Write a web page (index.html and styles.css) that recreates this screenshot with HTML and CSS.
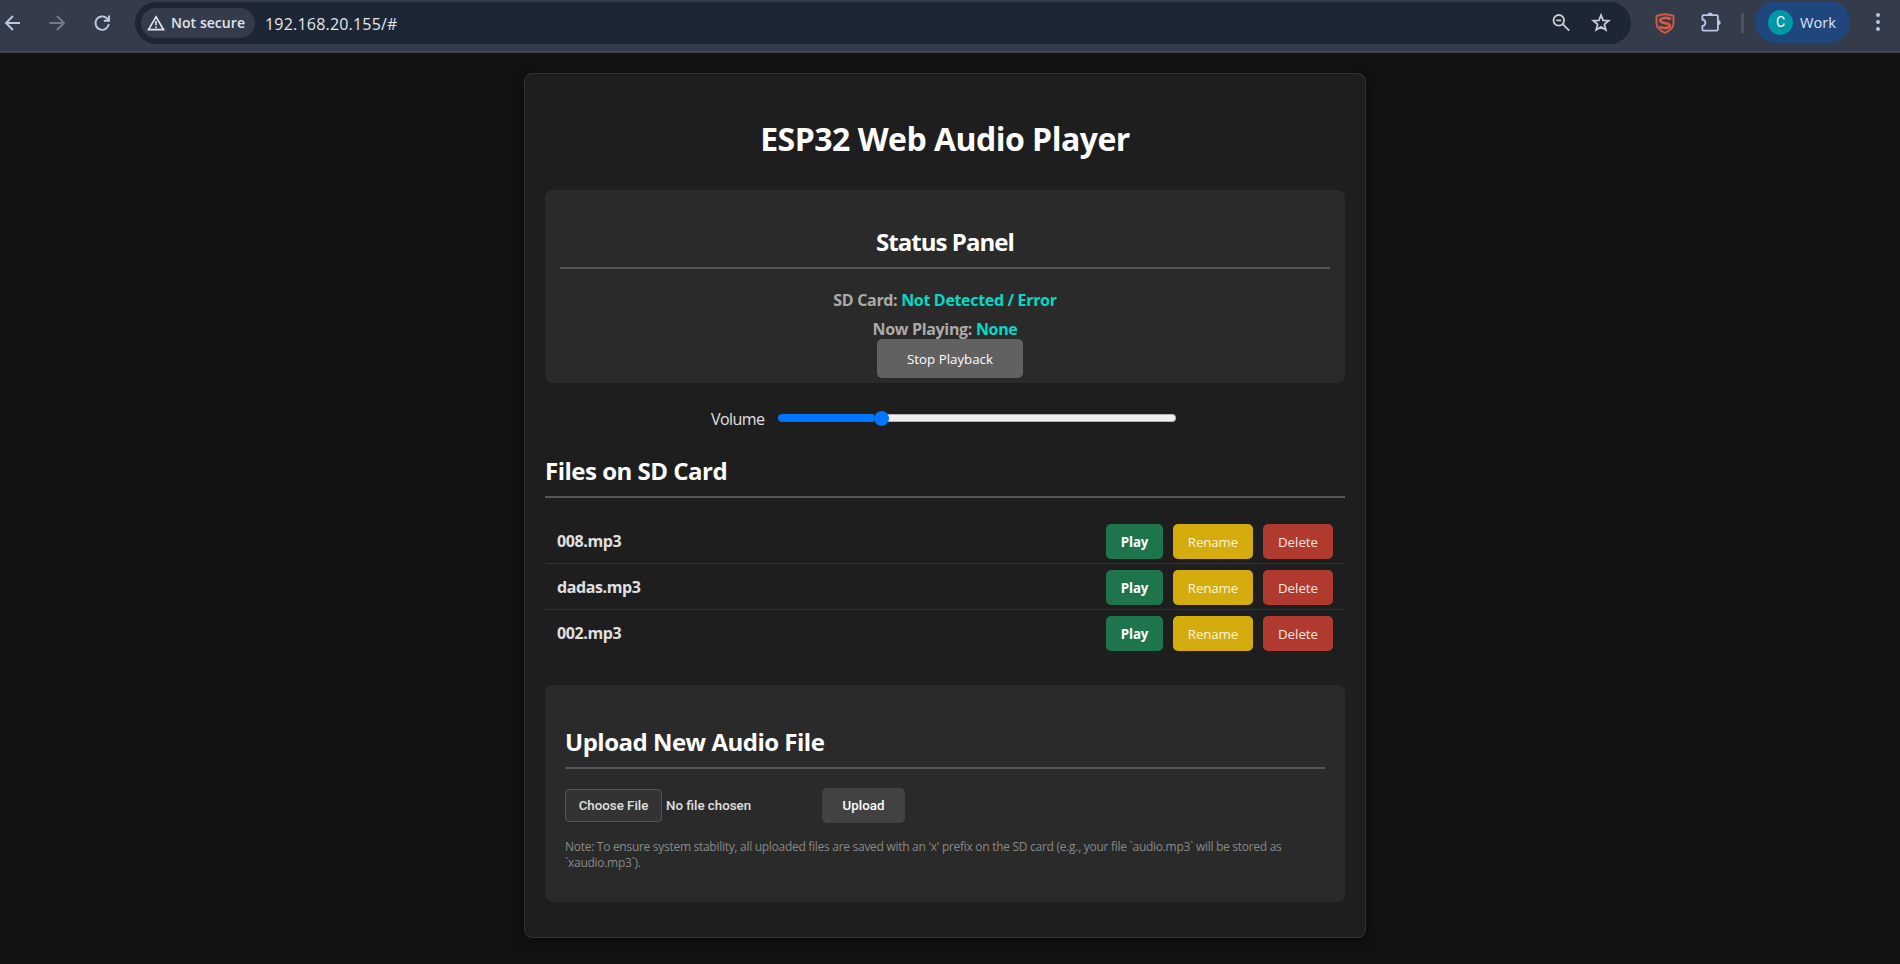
FILE: index.html
```html
<!DOCTYPE html>
<html lang="en">
<head>
<meta charset="utf-8">
<title>ESP32 Web Audio Player</title>
<link rel="stylesheet" href="styles.css">
</head>
<body>
<header class="toolbar">
  <nav class="nav">
    <svg class="icon" viewBox="0 0 20 20"><path d="M18 10H4M11 3L4 10l7 7"/></svg>
    <svg class="icon dim" viewBox="0 0 20 20"><path d="M2.500 10h14M10 3l7 7-7 7"/></svg>
    <svg class="icon" viewBox="0 0 20 20"><path d="M16.800 11a6.700 6.700 0 1 1-2-5.700L17 7.500M17 2.600v5.200h-5.200"/></svg>
  </nav>
  <div class="omnibox">
    <span class="chip">
      <svg class="warn" viewBox="0 0 18 16"><path d="M9 1.800L16.600 14.700H1.400z"/><path d="M9 6v4.300M9 11.500v1.700"/></svg>
      <b class="chip-text">Not secure</b>
    </span>
    <span class="url">192.168.20.155/#</span>
    <svg class="box-icon magnifier" viewBox="0 0 20 20"><circle cx="7.800" cy="7.300" r="5.300"/><path d="M11.700 11.200l6.500 6.500M5.300 7.300h5"/></svg>
    <svg class="box-icon star" viewBox="0 0 20 20"><path d="M10 2.200l2.100 5.200 5.600.4-4.300 3.600 1.400 5.500-4.800-3-4.800 3 1.400-5.500-4.300-3.600 5.600-.4z"/></svg>
  </div>
  <svg class="shield" viewBox="0 0 20 21"><path class="shield-rim" d="M1.500 3Q10-.4 18.500 3v8Q18 16.500 10 19.800 2 16.500 1.500 11z"/><path class="shield-mark" d="M16 6.300C12 4.300 5.200 4.400 5.200 7.600c0 3.400 9.600 1.600 9.600 5 0 3.200-6.800 3-10.600 1"/></svg>
  <svg class="puzzle" viewBox="0 0 22 22"><path d="M3.600 4.200h13.100q1.200 0 1.200 1.200v13q0 1.200-1.200 1.200H3.600q-1.200 0-1.200-1.200v-3.300q3-.6 3-3.300t-3-3.300V5.400q0-1.200 1.200-1.200z"/><path class="knob" d="M7.600 4a2.600 2.600 0 0 1 5.200 0zM18 9a2.600 2.600 0 0 1 0 5.200z"/></svg>
  <span class="divider"></span>
  <div class="profile"><span class="avatar">C</span><span class="work">Work</span></div>
  <div class="kebab"><i></i><i></i><i></i></div>
</header>

<main class="container">
  <h1 class="title">ESP32 Web Audio Player</h1>
  <section class="status">
    <h2 class="heading status-heading">Status Panel</h2>
    <p class="line sd">SD Card: <span class="value">Not Detected / Error</span></p>
    <p class="line now">Now Playing: <span class="value">None</span></p>
    <button class="btn stop">Stop Playback</button>
  </section>
  <div class="volume">
    <label class="volume-label">Volume</label>
    <div class="track"><div class="fill"></div><div class="thumb"></div><div class="rest"></div></div>
  </div>
  <h2 class="heading files-heading">Files on SD Card</h2>
  <ul class="files">
    <li class="file"><span class="name">008.mp3</span><button class="btn play">Play</button><button class="btn rename">Rename</button><button class="btn delete">Delete</button></li>
    <li class="file"><span class="name">dadas.mp3</span><button class="btn play">Play</button><button class="btn rename">Rename</button><button class="btn delete">Delete</button></li>
    <li class="file"><span class="name">002.mp3</span><button class="btn play">Play</button><button class="btn rename">Rename</button><button class="btn delete">Delete</button></li>
  </ul>
  <section class="upload">
    <h2 class="heading upload-heading">Upload New Audio File</h2>
    <div class="form">
      <button class="choose">Choose File</button>
      <span class="chosen">No file chosen</span>
      <button class="btn send">Upload</button>
    </div>
    <p class="note">Note: To ensure system stability, all uploaded files are saved with an 'x' prefix on the SD card (e.g., your file `audio.mp3` will be stored as<br>`xaudio.mp3`).</p>
  </section>
</main>
</body>
</html>
```

FILE: styles.css
```css
* { box-sizing: border-box; }
body { margin: 0; height: 964px; overflow: hidden; background: #121212; color: #e0e0e0; font: 16px/22px "Open Sans", "Noto Sans", sans-serif; }
h1, h2, p, ul { margin: 0; padding: 0; }
svg { fill: none; flex: none; }
button { font-family: inherit; padding: 0; border: 0; white-space: nowrap; }

.toolbar { display: flex; height: 53px; padding-top: 2px; background: #343c4c; border-bottom: 2px solid #42474d; }
.nav { display: flex; gap: 25px; width: 135px; padding: 11px 0 0 2px; }
.icon { width: 20px; height: 20px; stroke: #bfcbe2; stroke-width: 1.9; }
.dim { stroke: #747a87; }
.omnibox { display: flex; align-items: center; width: 1496px; height: 42px; padding: 0 20px 0 6px; border-radius: 21px; background: #1d2635; }
.chip { display: flex; align-items: center; width: 114px; height: 30px; padding-left: 6px; gap: 6px; border-radius: 15px; background: #343c4c; }
.warn { width: 18px; height: 16px; stroke: #dfe2e8; stroke-width: 1.7; }
.chip-text { font-size: 14px; font-weight: 600; letter-spacing: .05px; color: #e1e4ea; white-space: nowrap; }
.url { margin-left: 10px; padding-top: 1px; font-size: 16px; letter-spacing: .2px; color: #e3e6ec; }
.box-icon { width: 20px; height: 20px; stroke: #cccdd2; stroke-width: 1.8; }
.magnifier { margin-left: auto; margin-right: 20px; }
.shield { width: 20px; height: 21px; margin: 11px 0 0 24px; }
.shield-rim { stroke: #d65a43; stroke-width: 1.9; }
.shield-mark { stroke: #d65a43; stroke-width: 2.7; }
.puzzle { width: 22px; height: 22px; margin: 9px 0 0 25px; stroke: #b7c6e6; stroke-width: 1.8; }
.knob { fill: #b7c6e6; stroke: none; }
.divider { width: 3px; height: 20px; margin: 11px 0 0 19px; background: #4a5362; border-radius: 1px; }
.profile { display: flex; align-items: center; width: 95px; height: 42px; margin: -1px 0 0 11px; padding-left: 13px; gap: 7px; border-radius: 21px; background: #1f477e; }
.avatar { width: 25px; height: 25px; border-radius: 50%; background: #0097a7; color: #fff; font: 14px/25px Roboto, sans-serif; text-align: center; }
.work { font-size: 14.600px; color: #dbe5fa; }
.kebab { display: flex; flex-direction: column; gap: 3px; margin: 11px 0 0 26px; }
.kebab i { width: 4px; height: 4px; border-radius: 50%; background: #b7c6e6; }

.container { width: 842px; height: 865px; margin: 20px 0 0 524px; padding: 0 20px; background: #1e1e1e; border: 1px solid #333; border-radius: 8px; box-shadow: 0 4px 12px rgba(0, 0, 0, .5); }
.title { padding-top: 42px; height: 116px; font-size: 32px; line-height: 45px; letter-spacing: -.52px; text-align: center; color: #fff; white-space: nowrap; }
.status { height: 193px; padding: 35px 15px 0; background: #2a2a2a; border-radius: 8px; text-align: center; }
.heading { height: 44px; border-bottom: 2px solid #555; color: #fff; font-size: 24px; line-height: 34px; letter-spacing: -.5px; white-space: nowrap; }
.status-heading { letter-spacing: -.95px; }
.line { height: 29px; font-weight: 700; color: #aaa; letter-spacing: -.33px; white-space: nowrap; }
.sd { margin-top: 20px; }
.now { height: 21px; }
.value { color: #03dac6; }
.btn { display: block; height: 35px; border-radius: 5px; color: #fff; font-size: 13.3px; line-height: 36px; text-align: center; }
.stop { width: 146px; height: 39px; margin-left: 317px; background: #616161; line-height: 40px; }
.volume { display: flex; height: 71px; padding: 24px 0 0 166px; }
.volume-label { width: 67px; padding-top: 1px; letter-spacing: -.55px; }
.track { display: flex; align-items: center; width: 398px; height: 22px; }
.fill { width: 96px; height: 8px; background: #0075ff; border-radius: 4px 0 0 4px; }
.thumb { width: 15px; height: 15px; border-radius: 50%; background: #0075ff; margin-right: -2px; z-index: 1; }
.rest { flex: 1; height: 8px; background: #efefef; border: 1px solid #b2b2b2; border-left: 0; border-radius: 0 4px 4px 0; }
.files { margin-top: 20px; list-style: none; }
.file { display: flex; height: 46px; padding: 6px 12px 4px; border-bottom: 1px solid #333; }
.file:last-child { border: 0; }
.name { margin-right: auto; padding-top: 6px; font-weight: 700; letter-spacing: -.4px; }
.play { width: 57px; background: #1e744b; font-weight: 700; letter-spacing: -.1px; }
.rename { width: 80px; margin-left: 10px; background: #d4ac0d; color: #fbf4dc; letter-spacing: -.1px; }
.delete { width: 70px; margin-left: 10px; background: #b03a2e; color: #f8e6e4; }
.upload { height: 217px; margin-top: 29px; padding: 40px 20px 0; background: #2a2a2a; border-radius: 8px; }
.form { display: flex; height: 70px; padding-top: 19px; font-family: Roboto, sans-serif; font-size: 13.3px; font-weight: 500; }
.choose { width: 97px; height: 33px; margin-top: 1px; border: 1px solid #555; border-radius: 4px; background: #333; color: #e0e0e0; font-size: 13.3px; font-weight: 500; }
.chosen { width: 160px; padding: 7px 0 0 4px; }
.send { width: 83px; background: #424242; font-weight: 500; line-height: 35px; }
.note { color: #888; font-size: 12px; line-height: 16px; letter-spacing: -.285px; white-space: nowrap; }
```
